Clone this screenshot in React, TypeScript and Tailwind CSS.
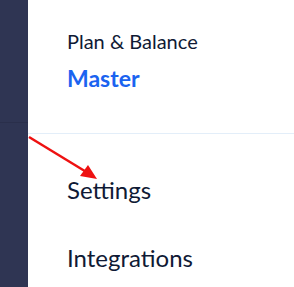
import React from "react";

export default function App() {
  return (
    <div className="relative flex h-[287px] w-[294px] overflow-hidden bg-white" style={{ fontFamily: "Lato, 'Noto Sans', sans-serif" }}>
      <div className="flex w-[28px] shrink-0 flex-col bg-[#2f3553]">
        <div className="h-[123px] border-b border-[#2a2f4b]" />
      </div>
      <div className="flex flex-1 flex-col">
        <div className="h-[134px] border-b border-[#e3eef9] pl-[39px] pt-[29px]">
          <div className="text-[20px] leading-[24px] text-[#0f1a35]">Plan &amp; Balance</div>
          <div className="mt-[11px] text-[23px] font-bold leading-[28px] text-[#1b63f0]">Master</div>
        </div>
        <div className="pl-[39px] pt-[42px] text-[24px] leading-[28px] text-[#0f1a35]">Settings</div>
        <div className="pl-[39px] pt-[40px] text-[24px] leading-[28px] text-[#0f1a35]">Integrations</div>
      </div>
      <svg className="absolute left-0 top-0" width="294" height="287">
        <line x1="29" y1="137" x2="88" y2="173" stroke="#ee1111" strokeWidth="2.5" />
        <polygon points="97,179 80,176 88,165" fill="#ee1111" />
      </svg>
    </div>
  );
}
